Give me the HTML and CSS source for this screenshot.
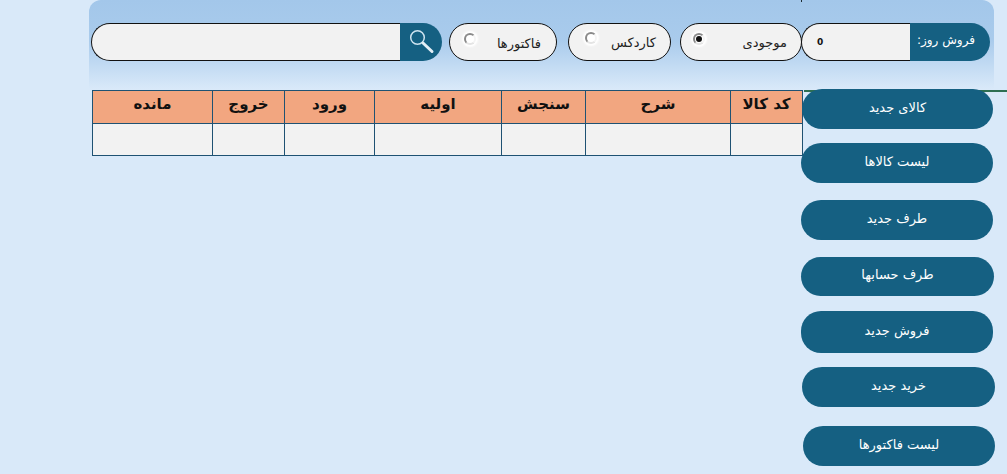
FILE: index.html
```html
<!DOCTYPE html>
<html lang="fa">
<head>
  <meta charset="UTF-8">
  <meta name="viewport" content="width=device-width, initial-scale=1.0">
  <title>انبار</title>
  <link rel="stylesheet" href="styles.css">
</head>
<body>
  <div class="page">
    <span class="top-tick"></span>
    <!-- نوار بالا -->
    <div class="top-panel">
      <div class="search-box">
        <div class="search-input"></div>
        <button class="search-btn" type="button">
          <svg width="30" height="28" viewBox="0 0 30 28" fill="none">
            <circle cx="10.5" cy="9.5" r="6.8" stroke="#cfe4f0" stroke-width="1.5"/>
            <path d="M16 15L25 23.5" stroke="#e4eff6" stroke-width="3" stroke-linecap="round"/>
          </svg>
        </button>
      </div>
      <div class="radio-pill pill-invoices">
        <span class="radio-mark"></span>
        <span class="radio-label">فاکتورها</span>
      </div>
      <div class="radio-pill pill-kardex">
        <span class="radio-mark"></span>
        <span class="radio-label">کاردکس</span>
      </div>
      <div class="radio-pill pill-stock">
        <span class="radio-mark checked"></span>
        <span class="radio-label">موجودی</span>
      </div>
      <div class="sales-box">
        <div class="sales-value">0</div>
        <div class="sales-label" dir="rtl">فروش روز:</div>
      </div>
    </div>

    <div class="content">
      <!-- جدول کالا -->
      <table class="goods-table">
        <thead>
          <tr>
            <th class="col-rest">مانده</th>
            <th class="col-out">خروج</th>
            <th class="col-in">ورود</th>
            <th class="col-first">اولیه</th>
            <th class="col-check">سنجش</th>
            <th class="col-desc">شرح</th>
            <th class="col-code">کد کالا</th>
          </tr>
        </thead>
        <tbody>
          <tr><td></td><td></td><td></td><td></td><td></td><td></td><td></td></tr>
        </tbody>
      </table>

      <!-- منوی کناری -->
      <div class="side-menu">
        <span class="side-rule"></span>
        <button class="menu-btn btn-goods" type="button">کالای جدید</button>
        <button class="menu-btn btn-list" type="button">لیست کالاها</button>
        <button class="menu-btn btn-party" type="button">طرف جدید</button>
        <button class="menu-btn btn-accounts" type="button">طرف حسابها</button>
        <button class="menu-btn btn-sale" type="button">فروش جدید</button>
        <button class="menu-btn btn-buy" type="button">خرید جدید</button>
        <button class="menu-btn btn-invoices" type="button">لیست فاکتورها</button>
      </div>
    </div>
  </div>
</body>
</html>
```

FILE: styles.css
```css
* { box-sizing: border-box; }
html, body { height: 100%; }
body {
  margin: 0;
  background: #d9e9f9;
  color: #111;
  font-family: "DejaVu Sans", "Noto Sans", sans-serif;
  overflow: hidden;
}
.page {
  width: 1007px;
  height: 474px;
  position: relative;
}
.top-tick {
  position: absolute;
  left: 801px;
  top: 0;
  width: 1px;
  height: 2px;
  background: #1c2a30;
}
.top-panel {
  display: flex;
  align-items: flex-start;
  width: 905px;
  height: 89px;
  margin-left: 89px;
  padding: 23px 0 0 2px;
  border-radius: 12px 12px 0 0;
  background: linear-gradient(to bottom, #a3c7ea 0%, #a9cbec 45%, #d9e9f9 100%);
}
.search-box, .sales-box { display: flex; height: 38px; }
.search-box { width: 351px; }
.search-input {
  width: 309px;
  background: #f2f2f2;
  border: 1px solid #111;
  border-right: none;
  border-radius: 19px 0 0 19px;
}
.search-btn {
  width: 42px;
  padding: 0 0 0 7px;
  border: none;
  border-radius: 0 19px 19px 0;
  background: #156082;
  display: flex;
  align-items: center;
  justify-content: flex-start;
}
.radio-pill {
  display: flex;
  height: 38px;
  background: #f2f2f2;
  border: 1px solid #111;
  border-radius: 19px;
  position: relative;
  font-size: 13px;
}
.pill-invoices { width: 108px; margin-left: 7px; }
.pill-kardex { width: 103px; margin-left: 11px; }
.pill-stock { width: 122px; margin-left: 9px; }
.radio-label {
  position: absolute;
  white-space: nowrap;
  color: #222;
}
.pill-invoices .radio-label { right: 15px; top: 12px; }
.pill-kardex .radio-label { right: 14px; top: 11px; }
.pill-stock .radio-label { right: 14px; top: 11px; }
.radio-mark {
  position: absolute;
  width: 12px;
  height: 12px;
  border-radius: 50%;
  background: #fff;
  border: 2px solid;
  border-color: #8a8a8a #f4f4f4 #e4e4e4 #8a8a8a;
  box-shadow: 0 0 2px 2px #fff;
}
.pill-invoices .radio-mark { left: 14px; top: 9px; }
.pill-kardex .radio-mark { left: 16px; top: 8px; }
.pill-stock .radio-mark { left: 12px; top: 9px; }
.radio-mark.checked::after {
  content: "";
  position: absolute;
  left: 1px;
  top: 1px;
  width: 6px;
  height: 6px;
  border-radius: 50%;
  background: #111;
}
.sales-box { width: 189px; margin-left: -1px; }
.sales-value {
  width: 109px;
  padding: 13px 0 0 15px;
  background: #f2f2f2;
  border: 1px solid #111;
  border-right: none;
  border-radius: 19px 0 0 19px;
  font-size: 9px;
  font-weight: bold;
}
.sales-label {
  width: 80px;
  padding: 10px 15px 0 0;
  background: #156082;
  color: #fff;
  border-radius: 0 19px 19px 0;
  font-size: 12px;
  white-space: nowrap;
}
.content {
  display: flex;
  align-items: flex-start;
  padding-left: 92px;
}
.goods-table {
  width: 710px;
  margin-top: 1px;
  border-collapse: collapse;
  table-layout: fixed;
}
.goods-table th, .goods-table td { border: 1px solid #1f5273; }
.goods-table th {
  height: 33px;
  padding: 0 0 6px;
  background: #f2a680;
  font-size: 15px;
  font-weight: bold;
  color: #111;
}
.goods-table td { height: 32px; background: #f2f2f2; }
.col-rest { width: 120px; }
.col-out { width: 72px; }
.col-in { width: 90px; }
.col-first { width: 127px; }
.col-check { width: 84px; }
.col-desc { width: 145px; }
.col-code { width: 72px; }
.side-menu {
  display: flex;
  flex-direction: column;
  align-items: flex-start;
  margin-left: -2px;
  position: relative;
}
.side-rule {
  position: absolute;
  left: 3px;
  top: 1px;
  width: 205px;
  height: 2px;
  background: #2e6f52;
}
.menu-btn {
  height: 40px;
  width: 192px;
  border: none;
  border-radius: 20px;
  background: #156082;
  color: #fff;
  font-family: inherit;
  font-size: 13px;
  padding: 0 0 4px;
  flex: none;
  position: relative;
}
.btn-goods { width: 191px; margin-left: 1px; }
.btn-list { margin-top: 14px; }
.btn-party { margin-top: 17px; }
.btn-accounts { margin-top: 17px; height: 39px; width: 193px; }
.btn-sale { margin-top: 15px; height: 42px; }
.btn-buy { margin-top: 14px; margin-left: 1px; width: 193px; }
.btn-invoices { margin-top: 19px; margin-left: 2px; }
```
